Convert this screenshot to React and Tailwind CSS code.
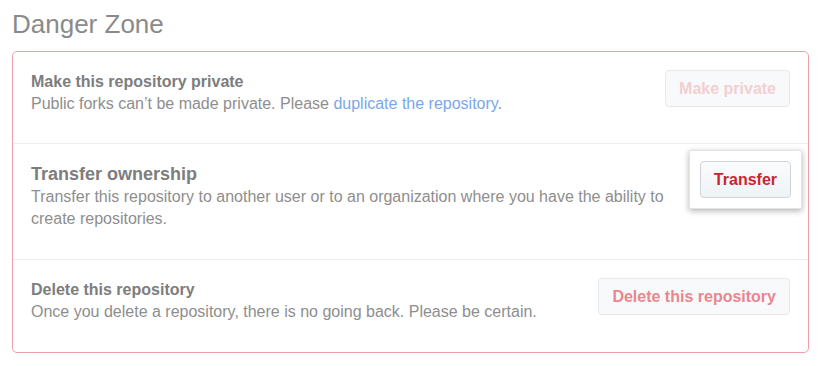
import React from 'react';

const rows = [
  {
    key: 'private',
    title: 'Make this repository private',
    titleClass: 'text-[16px] leading-[23px]',
    rowPad: 'pb-[28px]',
    button: 'Make private',
    faded: 'light',
  },
  {
    key: 'transfer',
    title: 'Transfer ownership',
    titleClass: 'text-[18px] leading-[24px]',
    rowPad: 'pb-[29px]',
    button: 'Transfer',
    faded: 'none',
  },
  {
    key: 'delete',
    title: 'Delete this repository',
    titleClass: 'text-[16px] leading-[23px]',
    rowPad: 'pb-[29px]',
    button: 'Delete this repository',
    faded: 'mid',
  },
];

const Description = ({ id }) => {
  if (id === 'private') {
    return (
      <p>
        Public forks can’t be made private. Please{' '}
        <a href="#" className="text-[#7aa7e8]">duplicate the repository</a>.
      </p>
    );
  }
  if (id === 'transfer') {
    return (
      <p>
        Transfer this repository to another user or to an organization where you have the ability to create
        repositories.
      </p>
    );
  }
  return <p>Once you delete a repository, there is no going back. Please be certain.</p>;
};

const DangerButton = ({ label, faded }) => {
  if (faded === 'none') {
    // highlighted button, sits in a raised white card
    return (
      <div className="-mt-[12px] -mb-[11px] -mx-[12px] p-[10px] bg-white border border-[#e4e4e4] shadow-[0_2px_6px_rgba(0,0,0,0.3)]">
        <button className="h-[37px] px-[13px] rounded-[4px] border border-[#d1d5da] bg-gradient-to-b from-[#fafbfc] to-[#eff3f6] text-[#cb2431] text-[16px] font-bold whitespace-nowrap">
          {label}
        </button>
      </div>
    );
  }
  const text = faded === 'light' ? 'text-[#f3cfd2]' : 'text-[#e8878f]';
  return (
    <button className={`h-[37px] px-[13px] rounded-[4px] border border-[#e6e8ea] bg-[#f8f9fa] text-[16px] font-bold whitespace-nowrap ${text}`}>
      {label}
    </button>
  );
};

const App = () => {
  return (
    <div className="w-[821px] h-[366px] bg-white px-[12px] pt-[8px] font-['Liberation_Sans',Arial,sans-serif]">
      <h2 className="text-[26px] leading-[32px] text-[#8a8a8a] mb-[11px]">Danger Zone</h2>
      <div className="w-[797px] border border-[#eaa2a8] rounded-[5px]">
        {rows.map((row, i) => (
          <div
            key={row.key}
            className={`flex items-start justify-between px-[18px] pt-[18px] ${row.rowPad} ${i > 0 ? 'border-t border-[#eeeeee]' : ''}`}
          >
            <div className="text-[16px] leading-[22px] text-[#8e8e8e] w-[650px]">
              <p className={`font-bold text-[#7d7d7d] ${row.titleClass}`}>{row.title}</p>
              <Description id={row.key} />
            </div>
            <DangerButton label={row.button} faded={row.faded} />
          </div>
        ))}
      </div>
    </div>
  );
};

export default App;
